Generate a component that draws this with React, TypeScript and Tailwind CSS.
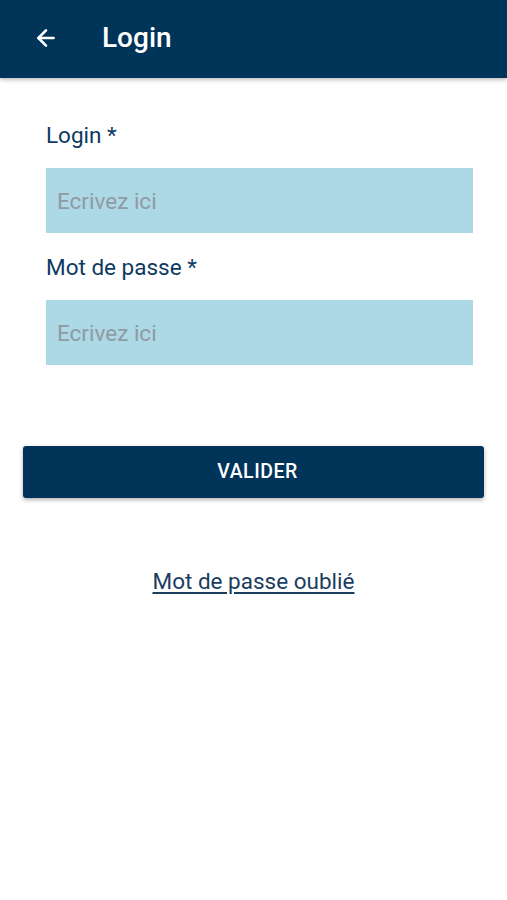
import { ArrowLeft } from 'lucide-react';

const Field = ({ label, type }: { label: string; type: string }) => (
  <div className="flex flex-col">
    <label className="text-[22.5px] leading-[26px] text-[#0d3a5f]">{label}</label>
    <input
      type={type}
      placeholder="Ecrivez ici"
      className="mt-[20px] h-[65px] w-full bg-[#add8e6] px-[11px] text-[22.5px] text-gray-700 placeholder:text-[#8f9ba3] outline-none"
    />
  </div>
);

const App = () => {
  return (
    <div className="min-h-[900px] bg-white" style={{ fontFamily: 'Roboto, "Liberation Sans", sans-serif' }}>
      <header className="flex h-[78px] items-center bg-[#003459] shadow-[0_2px_4px_rgba(0,0,0,0.25)]">
        <button className="ml-[33px] -mt-[2px] text-white" aria-label="Retour">
          <ArrowLeft className="h-[26px] w-[26px]" strokeWidth={2.4} />
        </button>
        <h1 className="ml-[43px] -mt-[2px] text-[28px] font-medium text-white">Login</h1>
      </header>

      <div className="flex flex-col gap-[21px] ml-[46px] mr-[34px] pt-[44px]">
        <Field label="Login *" type="text" />
        <Field label="Mot de passe *" type="password" />
      </div>

      <div className="px-[23px] pt-[81px]">
        <button className="flex h-[52px] w-full items-center justify-center rounded-[3px] bg-[#003459] pl-[8px] text-[19.5px] font-medium tracking-[0.5px] text-white shadow-[0_2px_4px_rgba(0,0,0,0.3)]">
          VALIDER
        </button>
      </div>

      <div className="flex justify-center pt-[70px]">
        <a href="#" className="text-[22.5px] leading-[26px] text-[#1b3d5e] underline underline-offset-[3px]">
          Mot de passe oublié
        </a>
      </div>
    </div>
  );
};

export default App;
